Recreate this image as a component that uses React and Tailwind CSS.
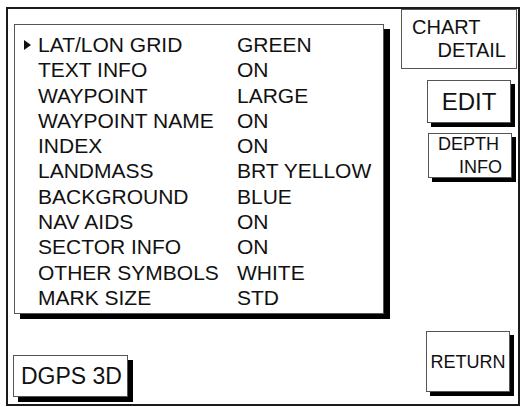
import React from "react";

const rows = [
  ["LAT/LON GRID", "GREEN"],
  ["TEXT INFO", "ON"],
  ["WAYPOINT", "LARGE"],
  ["WAYPOINT NAME", "ON"],
  ["INDEX", "ON"],
  ["LANDMASS", "BRT YELLOW"],
  ["BACKGROUND", "BLUE"],
  ["NAV AIDS", "ON"],
  ["SECTOR INFO", "ON"],
  ["OTHER SYMBOLS", "WHITE"],
  ["MARK SIZE", "STD"],
];

export default function App() {
  return (
    <div className="w-[521px] h-[407px] bg-white overflow-hidden text-[#111]" style={{ fontFamily: '"Liberation Sans", Arial, sans-serif' }}>
      <div className="ml-[6px] mt-[7px] w-[514px] h-[399px] border-2 border-[#1a1a1a] flex">
        {/* left column */}
        <div className="w-[393px] flex flex-col">
          <div className="ml-[6px] mt-[15px] w-[370px] h-[290px] border border-[#555] bg-white shadow-[6px_5px_0_#000] pt-[7px]">
            {rows.map(([k, v], i) => (
              <div key={k} className="flex items-center h-[25.3px] text-[21px] leading-[25.3px]">
                <div className="w-[23px] pl-[9px] flex items-center">
                  {i === 0 && (
                    <svg width="7" height="10" viewBox="0 0 7 10">
                      <polygon points="0,0 7,5 0,10" fill="#111" />
                    </svg>
                  )}
                </div>
                <div className="w-[199px] whitespace-nowrap">{k}</div>
                <div className="whitespace-nowrap">{v}</div>
              </div>
            ))}
          </div>
          <div className="mt-auto mb-[7px] ml-[5px] w-[115px] h-[42px] border border-[#555] bg-white shadow-[5px_5px_0_#000] flex items-center pl-[7px] text-[23px] leading-none whitespace-nowrap">
            DGPS 3D
          </div>
        </div>
        {/* right column */}
        <div className="flex-1 flex flex-col">
          <div className="w-[116px] h-[60px] border border-[#555] bg-white flex flex-col justify-center px-[10px] text-[20px] leading-[23px]">
            <div className="text-left">CHART</div>
            <div className="text-right">DETAIL</div>
          </div>
          <div className="mt-[11px] ml-[26px] w-[84px] h-[43px] border border-[#555] bg-white shadow-[4px_4px_0_#000] flex items-center justify-center text-[24px] leading-none">
            EDIT
          </div>
          <div className="mt-[10px] ml-[27px] w-[84px] h-[45px] border border-[#555] bg-white shadow-[4px_4px_0_#000] flex flex-col justify-center px-[9px] text-[18px] leading-[23px]">
            <div className="text-left">DEPTH</div>
            <div className="text-right">INFO</div>
          </div>
          <div className="mt-auto mb-[12px] ml-[25px] w-[84px] h-[61px] border border-[#555] bg-white shadow-[4px_4px_0_#000] flex items-center justify-center text-[18px] leading-none">
            RETURN
          </div>
        </div>
      </div>
    </div>
  );
}
